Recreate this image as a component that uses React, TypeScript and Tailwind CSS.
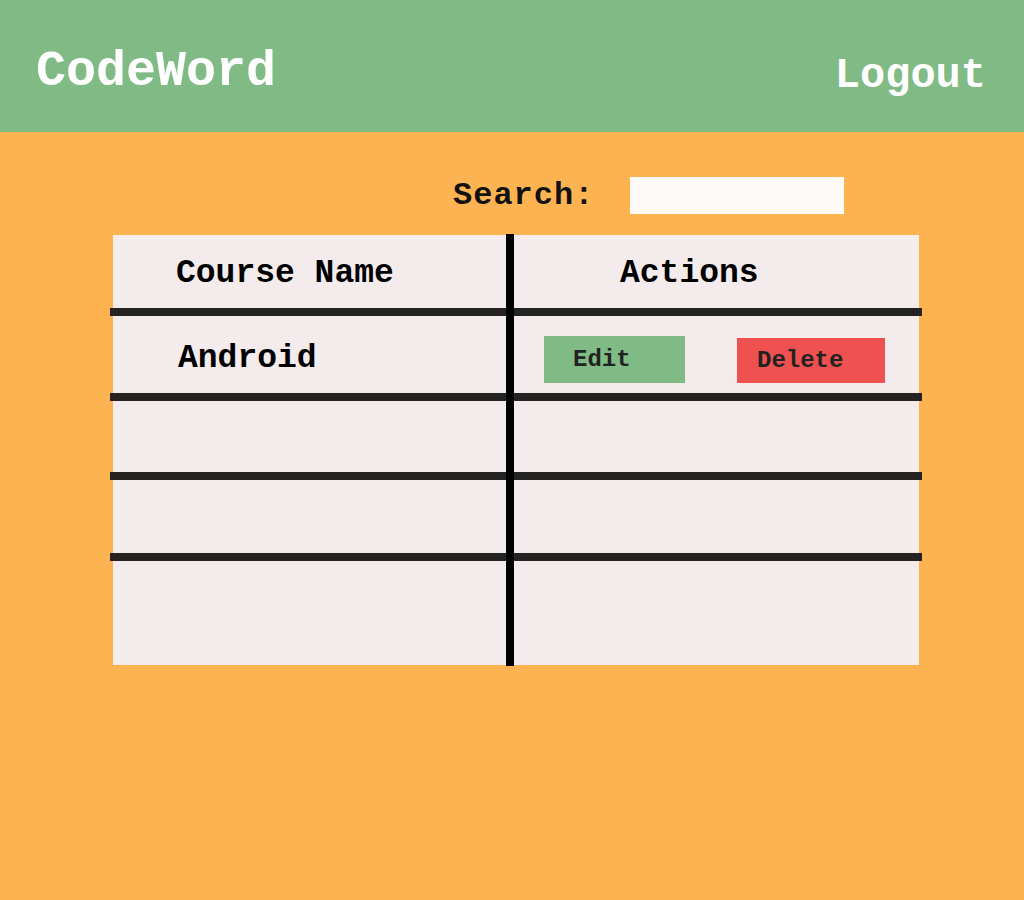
const ROWS = ["Android", "", "", ""];

function Line() {
  return <div className="h-[8px] -mx-[3px] bg-[#252321]" />;
}

export default function App() {
  return (
    <div className="min-h-[900px] bg-[#feb353] font-['Liberation_Mono',monospace] font-bold">
      <header className="flex h-[132px] items-center justify-between bg-[#80bb86] pl-[36px] pr-[38px] text-white">
        <h1 className="mt-[12px] text-[50px] leading-none">CodeWord</h1>
        <button className="mt-[19px] text-[42px] leading-none">Logout</button>
      </header>

      <main className="ml-[113px] w-[806px] pt-[45px]">
        <div className="flex items-center pl-[340px]">
          <label className="text-[32px] leading-none tracking-[1px] text-[#111]">Search:</label>
          <input className="ml-[36px] h-[37px] w-[214px] bg-[#fffafa] outline-none" />
        </div>

        <div className="relative mt-[21px] flex h-[430px] flex-col bg-[#f4ecec] text-[33px] text-black">
          <div className="flex h-[73px] items-center">
            <div className="w-[393px] pl-[63px] pt-[4px]">Course Name</div>
            <div className="pl-[114px] pt-[4px]">Actions</div>
          </div>
          <Line />
          <div className="flex h-[77px] items-center">
            <div className="w-[393px] pl-[65px] pt-[9px]">{ROWS[0]}</div>
            <div className="flex items-end gap-[52px] pl-[38px] pt-[10px]">
              <button className="h-[47px] w-[141px] bg-[#80bb86] pl-[29px] text-left text-[24px] text-[#222]">Edit</button>
              <button className="h-[45px] w-[148px] bg-[#ef5050] pl-[20px] text-left text-[24px] text-[#222]">Delete</button>
            </div>
          </div>
          <Line />
          <div className="h-[71px]" />
          <Line />
          <div className="h-[73px]" />
          <Line />
          <div className="flex-1" />
          <div className="absolute -top-[1px] -bottom-[1px] left-[393px] w-[8px] bg-black" />
        </div>
      </main>
    </div>
  );
}
